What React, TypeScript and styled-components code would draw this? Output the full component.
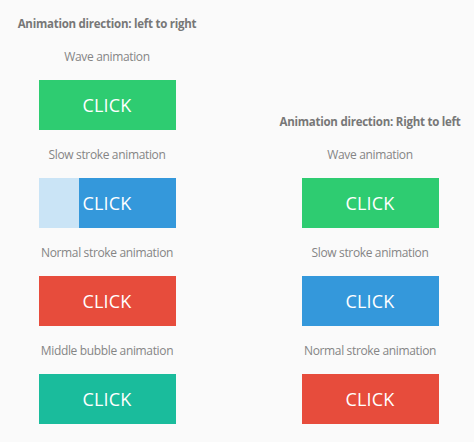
import React from "react";
import styled, { createGlobalStyle, css } from "styled-components";

const GlobalStyle = createGlobalStyle`
  html, body {
    margin: 0;
    padding: 0;
    background: #fafafa;
    font-family: "Open Sans", "Noto Sans", sans-serif;
  }
`;

const colors = {
  green: "#2ecc71",
  blue: "#3498db",
  red: "#e74c3c",
  teal: "#1abc9c",
};

type Tone = keyof typeof colors;

const Page = styled.div`
  display: flex;
  align-items: flex-end;
  gap: 63px;
  padding: 16px 0 18px 7px;
`;

const Column = styled.section`
  width: 200px;
  display: flex;
  flex-direction: column;
  align-items: center;
`;

const Heading = styled.h3`
  margin: 0 0 17px;
  font-size: 11.5px;
  line-height: 16px;
  font-weight: 700;
  letter-spacing: -0.25px;
  color: #777;
  white-space: nowrap;
`;

const Demo = styled.div`
  display: flex;
  flex-direction: column;
  align-items: center;
  & + & {
    margin-top: 17px;
  }
`;

const Label = styled.p`
  margin: 0 0 15px;
  font-size: 12px;
  line-height: 16px;
  letter-spacing: -0.35px;
  color: #858585;
  white-space: nowrap;
`;

const ClickButton = styled.button<{ $tone: Tone; $progress?: number }>`
  position: relative;
  width: 137px;
  height: 50px;
  border: 0;
  padding: 0;
  overflow: hidden;
  background: ${(p) => colors[p.$tone]};
  color: #fff;
  font-family: "Open Sans", "Noto Sans", sans-serif;
  font-size: 18px;
  letter-spacing: 0.2px;
  cursor: pointer;
  span {
    position: relative;
  }
  ${(p) =>
    p.$progress !== undefined &&
    css`
      &::before {
        content: "";
        position: absolute;
        left: 0;
        top: 0;
        bottom: 0;
        width: ${p.$progress}px;
        background: rgba(255, 255, 255, 0.74);
      }
    `}
`;

type Item = { label: string; tone: Tone; progress?: number };

const leftItems: Item[] = [
  { label: "Wave animation", tone: "green" },
  { label: "Slow stroke animation", tone: "blue", progress: 40 },
  { label: "Normal stroke animation", tone: "red" },
  { label: "Middle bubble animation", tone: "teal" },
];

const rightItems: Item[] = [
  { label: "Wave animation", tone: "green" },
  { label: "Slow stroke animation", tone: "blue" },
  { label: "Normal stroke animation", tone: "red" },
];

function Group({ title, items }: { title: string; items: Item[] }) {
  return (
    <Column>
      <Heading>{title}</Heading>
      {items.map((it) => (
        <Demo key={it.label}>
          <Label>{it.label}</Label>
          <ClickButton $tone={it.tone} $progress={it.progress}>
            <span>CLICK</span>
          </ClickButton>
        </Demo>
      ))}
    </Column>
  );
}

export default function App() {
  return (
    <>
      <GlobalStyle />
      <Page>
        <Group title="Animation direction: left to right" items={leftItems} />
        <Group title="Animation direction: Right to left" items={rightItems} />
      </Page>
    </>
  );
}
